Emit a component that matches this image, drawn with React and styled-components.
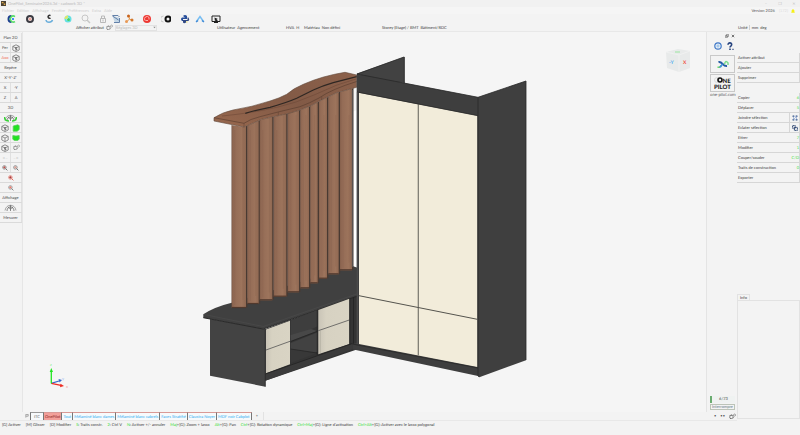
import styled, { createGlobalStyle } from "styled-components";

const GlobalStyle = createGlobalStyle`
    * {
        box-sizing: border-box;
    }

    body {
        margin: 0;
        background: #f3f3f3;
        color: #3c3c3c;
        font-family: Lato, "Liberation Sans", sans-serif;
        font-size: 4px;
        line-height: 6px;
        text-rendering: geometricPrecision;
    }

    button, select, input {
        font: inherit;
        color: inherit;
        margin: 0;
        padding: 0;
        border: 0;
        background: none;
        text-rendering: geometricPrecision;
    }

    svg {
        display: block;
    }
`;

const Page = styled.div`
    min-height: 100vh;
    display: flex;
    flex-direction: column;
    white-space: nowrap;
`;

const TitleBar = styled.header`
    display: flex;
    align-items: center;
    gap: 2px;
    height: 7px;
    padding: 0 3px 0 1px;
    color: #bababa;
    background: #f1f1f1;
`;

const Title = styled.h1`
    flex: 1;
    margin: 0;
    font-size: 4px;
    font-weight: 400;
`;

const WindowButton = styled.button`
    width: 6px;
    margin-left: 6px;
    color: #c4c4c4;
`;

const MenuBar = styled.nav`
    display: flex;
    align-items: center;
    gap: 3px;
    height: 7px;
    padding: 0 5px 0 2px;
    background: #f5f5f5;
`;

const MenuItem = styled.button`
    color: #cecece;
`;

const Version = styled.span`
    margin-left: auto;
    color: #555;

    small {
        margin-left: 3px;
        font-size: 4px;
        color: #ddd;
    }
`;

const ToolBar = styled.div`
    display: flex;
    height: 10px;
    padding-left: 6px;
    background: #f3f3f3;
`;

const ToolGroup = styled.div`
    display: flex;
    gap: ${({ $gap }) => $gap}px;
    margin-right: ${({ $after }) => $after}px;
`;

const ToolButton = styled.button`
    width: 10px;
    height: 10px;
`;

const AttributeBar = styled.div`
    display: grid;
    grid-template-columns: 141px 69px 18px 78px 1fr 62px;
    align-items: center;
    height: 8px;
    padding-left: 76px;
    border-bottom: 1px solid #e8e8e8;
`;

const Attribute = styled.div`
    display: flex;
    align-items: center;
    gap: 2px;
`;

const Unit = styled.span`
    padding-right: 1px;
    border-right: 1px solid #d0d0d0;
    line-height: 5px;
`;

const AttributeSelect = styled.select`
    width: 42px;
    height: 6px;
    color: #bcbcbc;
    border: 1px solid #e2e2e2;
    line-height: 4px;
    appearance: none;
`;

const SelectBox = styled.div`
    display: flex;
    align-items: center;

    svg {
        margin-left: -4px;
        pointer-events: none;
    }
`;

const Main = styled.main`
    flex: 1;
    display: flex;
`;

const Workspace = styled.div`
    flex: 1;
    min-width: 0;
    display: flex;
    flex-direction: column;
`;

const WorkArea = styled.div`
    flex: 1;
    display: flex;
`;

const SideBar = styled.aside`
    display: flex;
    flex-direction: column;
    width: 23px;
    padding-top: 1px;
    border-right: 1px solid #e6e6e6;
`;

const SideRow = styled.div`
    display: flex;
    height: 10px;
    border-bottom: 1px solid #dadada;
`;

const SideButton = styled.button`
    flex: 1;
    display: flex;
    align-items: center;
    justify-content: center;
    color: ${({ $color }) => $color || "#484848"};
    border-right: 1px solid #e0e0e0;
`;

const Viewport = styled.section`
    flex: 1;
    min-width: 0;
    background: #f5f5f5;

    svg {
        width: 100%;
        height: auto;
    }
`;

const Dock = styled.aside`
    display: flex;
    flex-direction: column;
    width: 31px;
    padding: 1px 2px 2px 3px;
    border-left: 1px solid #e4e4e4;
    background: #f3f3f3;
`;

const DockControls = styled.div`
    display: flex;
    justify-content: flex-end;
    gap: 2px;
    height: 5px;
`;

const DockLinks = styled.div`
    display: flex;
    justify-content: space-between;
    padding: 4px 1px 5px 4px;
`;

const DockCard = styled.button`
    display: flex;
    align-items: center;
    justify-content: center;
    height: 18px;
    margin-bottom: 1px;
    border: 1px solid #c9c9c9;
`;

const SiteLink = styled.a`
    font-family: "Open Sans", sans-serif;
    text-align: center;
    color: #444;
    text-decoration: none;
`;

const Progress = styled.div`
    height: 7px;
    margin-top: auto;
    margin-bottom: 1px;
    border-left: 2px solid #6aac70;
    background: #eff2f1;
    text-align: center;
`;

const StopButton = styled.button`
    height: 6px;
    border: 1px solid #bcc4b8;
    line-height: 4px;
    color: #5f7c86;
`;

const TabStrip = styled.div`
    display: flex;
    align-items: stretch;
    height: 9px;
    padding: 0 0 0 25px;
    border-bottom: 1px solid #e8e8e8;
`;

const Tab = styled.button`
    height: 8px;
    padding: 0 ${({ $plain }) => ($plain ? 3 : 1)}px;
    color: ${({ $color }) => $color || "#32adf0"};
    background: ${({ $active }) => ($active ? "#f2a09a" : "#f7fafc")};
    border-top: 1px solid ${({ $plain }) => ($plain ? "#999" : "#d99a96")};
    border-right: 1px solid #777;
    border-left: ${({ $plain }) => ($plain ? "1px solid #777" : "0")};
`;

const TabExtras = styled.div`
    display: flex;
    align-items: center;
    gap: 4px;
    margin-left: auto;
    padding-right: 1px;
`;

const Pin = styled.button`
    display: flex;
    width: 5px;
    padding-top: 2px;
`;

const AddTab = styled.button`
    width: 12px;
    border-right: 1px solid #e2e2e2;
`;

const Panel = styled.aside`
    display: flex;
    flex-direction: column;
    width: 63px;
    padding: 21px 0 2px;
`;

const Command = styled.div`
    display: flex;
    height: 10px;
    border-bottom: 1px solid #d6d6d6;
    border-right: 1px solid #d6d6d6;
`;

const CommandButton = styled.button`
    flex: 1;
    display: flex;
    align-items: center;
    justify-content: space-between;
    padding-left: 1px;
    text-align: left;

    kbd {
        font: inherit;
        color: #40de40;
    }
`;

const CommandIcon = styled.button`
    display: flex;
    align-items: center;
    justify-content: center;
    width: 10px;
    border-left: 1px solid #d6d6d6;
`;

const Spacer = styled.div`
    height: 10px;
`;

const InfoTab = styled.button`
    align-self: flex-start;
    height: 6px;
    margin-top: auto;
    padding: 0 2px;
    border: 1px solid #e2e2e2;
    border-bottom: 0;
    line-height: 5px;
`;

const InfoBox = styled.div`
    height: 119px;
    border: 1px solid #e2e2e2;
`;

const StatusBar = styled.footer`
    display: flex;
    gap: 5px;
    height: 14px;
    padding: 1px 2px 0;
`;

const Hint = styled.span`
    b {
        font-weight: 400;
        color: #2fdd2f;
    }
`;

const Icon = ({ size = 10, children }) => (
    <svg width={size} height={size} viewBox="0 0 20 20" fill="none" strokeWidth="2" aria-hidden="true">
        {children}
    </svg>
);

const Gears = ({ color = "#777" }) => (
    <Icon size={7}>
        <circle cx="7" cy="11" r="5" stroke={color} strokeWidth="3" strokeDasharray="3 1" />
        <circle cx="16" cy="6" r="3" stroke={color} strokeDasharray="2 1" />
    </Icon>
);

const CubeIcon = ({ label }) => (
    <Icon size={8}>
        <path d="M2 6L10 2l8 4v9l-8 4-8-4zM2 6l8 4 8-4" stroke="#777" />
        {label ? <path d="M12 9H9v3h3v3H8" stroke="#555" /> : <path d="M10 10v9" stroke="#777" />}
    </Icon>
);

const Lens = ({ color = "#666", accent }) => (
    <Icon size={6}>
        <circle cx="8" cy="8" r="6" stroke={color} />
        <path d="M12 12l6 6" stroke={color} strokeWidth="3" />
        {accent && <path d="M4 8h8M8 4v8" stroke={accent} strokeWidth="3" />}
    </Icon>
);

const Eye = ({ accent }) => (
    <svg width="13" height="8" viewBox="0 0 26 16" fill="none" aria-hidden="true">
        <path d="M2 13C4 -1 22 -1 24 13" stroke="#888" strokeWidth="1.5" />
        <path d="M6 14C6 3 20 3 20 14M13 2v12M8 6l5 4 5-4" stroke="#666" strokeWidth="1.5" />
        {accent && <path d="M1 6c0 7 5 8 9 8M25 6c0 7-5 8-9 8" stroke="#35d435" strokeWidth="3" />}
    </svg>
);

const GreenBox = ({ flat }) => (
    <Icon size={8}>
        <path d={flat ? "M2 4q8 2 16 0v9l-4 3H6l-4-3z" : "M3 5l11-3 4 2v10l-5 4H3z"} fill="#20e320" stroke="#5ccd5c" />
    </Icon>
);

const tools = [
    {
        gap: 9,
        after: 8,
        items: [
            ["OnePilot", <><path d="M11 4a6 6 0 1 0 0 12" stroke="#1d3f8f" strokeWidth="4" /><path d="M18 5a6 6 0 1 0 0 10" stroke="#55dd65" strokeWidth="3" /><path d="M12 10h4" stroke="#3f8df5" strokeWidth="4" /></>],
            ["Cible", <><circle cx="10" cy="10" r="6" stroke="#3b3b42" strokeWidth="4" /><circle cx="10" cy="10" r="3" fill="#eba59d" /></>],
            ["Cadwork", <><path d="M13 3a3 3 0 1 0 0 5" stroke="#333" strokeWidth="3" /><path d="M4 12c1 6 11 6 13 0" stroke="#6aaedb" strokeWidth="3" /></>],
            ["Couleurs", <><circle cx="10" cy="10" r="5" stroke="#63dfe2" strokeWidth="4" /><path d="M5 10a5 5 0 0 1 5-5" stroke="#dfe967" strokeWidth="4" /><circle cx="11" cy="11" r="3" fill="#41d465" /></>],
        ],
    },
    {
        gap: 7,
        after: 3,
        items: [
            ["Rechercher", <><circle cx="8" cy="8" r="6" stroke="#c7c7c7" /><path d="M12 12l6 6" stroke="#c7c7c7" strokeWidth="3" /></>],
            ["Verrouiller", <path d="M5 9h10v8H5zM7 9V4h6v5M10 11v4" stroke="#b8b8b8" />],
        ],
    },
    {
        gap: 3,
        after: 8,
        items: [
            ["Plans", <><path d="M3 4l13 3v11H8z" fill="#c2d5e5" /><path d="M3 3h11l3 3M3 4l12 8M17 8v9M6 17h11" stroke="#6481a9" /></>],
            ["Liens", <><path d="M5 16l6-6 5 3M11 10L9 3" stroke="#e8933f" /><circle cx="9" cy="4" r="3" fill="#c8641d" /><circle cx="5" cy="15" r="3" fill="#e89956" /><circle cx="16" cy="12" r="3" fill="#d3782e" /></>],
        ],
    },
    {
        gap: 9,
        after: 5,
        items: [
            ["Exporter", <><circle cx="10" cy="10" r="8" fill="#ed3833" /><path d="M6 13a5 5 0 0 1 8-6M14 7v4M7 13h5" stroke="#ffb3ad" /></>],
            ["Bascule", <><path d="M5 4a6 6 0 0 0 0 12" stroke="#c6c6c6" /><circle cx="14" cy="10" r="5" stroke="#111" strokeWidth="4" /></>],
            ["Python", <><path d="M6 4q4-4 8 0v6H6v4H4q-4-4 0-7h6z" fill="#274e9b" /><path d="M15 7h2q3 4 0 7h-5v3q-4 3-6 0v-5h9z" fill="#314984" /><path d="M12 15h3v2h-3z" fill="#e4db68" /></>],
        ],
    },
    {
        gap: 6,
        after: 0,
        items: [
            ["Niveau", <><path d="M3 15l7-10 7 10" stroke="#77bdf2" strokeWidth="3" /><path d="M2 16l4-3M18 16l-4-3" stroke="#438bd5" strokeWidth="3" /></>],
            ["Capture", <><path d="M2 4h16v11H2z" stroke="#222" /><path d="M7 7l7 3-3 1 4 4-2 2-4-4-1 3z" fill="#222" /><path d="M6 17h8" stroke="#222" /></>],
        ],
    },
];

const commands = [
    ["Activer attribut"],
    ["Ajouter"],
    ["Supprimer"],
    null,
    ["Copier", "6"],
    ["Déplacer", "5"],
    ["Joindre sélection", null, "join"],
    ["Eclater sélection", null, "split"],
    ["Etirer", "7"],
    ["Modifier", "1"],
    ["Couper/souder", "C/D"],
    ["Traits de construction", "0"],
    ["Exporter"],
];

const hints = [
    ["", "[G] Activer"],
    ["", "[M] Glisser"],
    ["", "[D] Modifier"],
    ["S", ": Traits constr."],
    ["2", ": Ctrl V"],
    ["N", ": Activer +/- annuler"],
    ["Maj", "+[G]: Zoom + lasso"],
    ["Alt", "+[G]: Pan"],
    ["Ctrl", "+[G]: Rotation dynamique"],
    ["Ctrl+Maj", "+[G]: Ligne d'activation"],
    ["Ctrl+Alt", "+[G]: Activer avec le lasso polygonal"],
];

// left, right, bottom of each claustra slat
const slats = [
    [231.7, 246, 308],
    [247.3, 258.7, 304],
    [259.7, 272.3, 300.3],
    [273.7, 286.3, 296.7],
    [287.7, 299, 292.3],
    [300.3, 309, 288.3],
    [310.3, 317.7, 283.3],
    [319, 327, 278.7],
    [328.3, 338.7, 274.3],
    [340, 352, 270.3],
];

const Model = () => (
    <svg viewBox="23 32 683 380" role="img" aria-label="Vue 3D">
        <defs>
            <linearGradient id="wood">
                <stop offset="0" stopColor="#86604c" />
                <stop offset="0.2" stopColor="#946c56" />
                <stop offset="0.7" stopColor="#9d745c" />
                <stop offset="1" stopColor="#8e6751" />
            </linearGradient>
            <linearGradient id="rail" x1="0" y1="1" x2="1" y2="0">
                <stop offset="0" stopColor="#98684e" />
                <stop offset="0.5" stopColor="#825a46" />
                <stop offset="1" stopColor="#8c614b" />
            </linearGradient>
            <linearGradient id="drawer">
                <stop offset="0" stopColor="#c9c4b7" />
                <stop offset="0.25" stopColor="#d7d2c2" />
                <stop offset="1" stopColor="#d9d4c4" />
            </linearGradient>
        </defs>

        <path d="M352 112L357 110V268L352 267Z" fill="#fff" />

        {/* bench */}
        <path d="M203.3 314.3Q214 307 231.7 302.7L352.3 266L358.3 268V296L263.3 329L203.3 317.7Z" fill="#404040" />
        <path d="M210 319L265.3 329V386.7L210 375.7Z" fill="#434343" />
        <path d="M265.3 329L358.3 295V349L265.3 380.7Z" fill="#343434" />
        <path d="M203.3 317.7L263.3 329L358 296" stroke="#2a2a2a" fill="none" />
        <path d="M204 314.5L263.3 326.5L358 293.5" stroke="#4e4e4e" strokeWidth="0.5" fill="none" />
        <path d="M290.7 320.5L317.3 310V326.5L290.7 338Z" fill="#3e3e3e" />
        <path d="M290.7 335L311 329L317.3 331L290.7 341Z" fill="#484848" />
        <path d="M290.7 343L317.3 332.5V352L290.7 361Z" fill="#424242" />
        <path d="M290.7 349L317.3 353L290.7 363Z" fill="#383838" />
        <path d="M290.7 341.5L318 331M290.7 349L317 353M317.3 310V355" stroke="#222" strokeWidth="0.7" />
        <path d="M266 329.5L290 320.7V364.3L266 373.3Z" fill="url(#drawer)" />
        <path d="M318.3 310L349.3 298.7V344L318.3 354.3Z" fill="url(#drawer)" />
        <path d="M266 350L290 341.3M318.3 330.7L349.3 320" stroke="#555" strokeWidth="0.8" />
        <path d="M320.3 331V353" stroke="#aaa698" strokeWidth="0.6" />
        <path d="M265.3 374L352.3 343.5V349.3L265.3 380.7Z" fill="#3b3b3b" />
        <path d="M265.3 374L352.3 343.5M265.3 329V386.7M349.8 298V345M353.5 297V344" stroke="#232323" strokeWidth="0.8" />

        {/* claustra */}
        {slats.map(([left, right, bottom]) => (
            <g key={left}>
                <rect x={left} y="88" width={right - left + 1.5} height={bottom - 88.5} fill="#493a32" />
                <rect x={left} y="88" width={right - left} height={bottom - 88} fill="url(#wood)" />
                <path d={`M${left + 3} 130V${bottom - 3}M${right - 3} 115V${bottom - 8}`} stroke="#7a5543" strokeWidth="0.3" opacity="0.5" />
                <path d={`M${left} ${bottom - 0.5}H${right}`} stroke="#51392d" strokeWidth="1.2" />
            </g>
        ))}
        <path d="M231 70H356.5V87.3L336.7 92.7L321.7 100Q312 106 300 110L278.3 115.7L261.7 119.3L244 127L231 125Z" fill="#f5f5f5" />
        <path d="M352.3 90V267" stroke="#666" strokeWidth="0.7" />
        <path
            d="M214 117.7Q223 112 233 110Q252 107 270 101Q280 98 286.7 94.3Q294 88 303.3 84.3Q322 76 345 72.3L356.7 75V87.3L336.7 92.7L321.7 100Q312 106 300 110Q290 113.5 278.3 115.7L261.7 119.3L244 127L214 121Z"
            fill="url(#rail)"
            stroke="#60483a"
            strokeWidth="0.6"
        />
        <path d="M214 117.7L244 123.3Q250 119 260 116.7L278 112L300 106.7Q310 103 319 98Q332 89 356.7 81.5" stroke="#553a2d" strokeWidth="0.6" fill="none" />
        <path d="M222 116Q253 113 278 107Q296 103 314 95L337 85L356 79" stroke="#694535" strokeWidth="0.5" fill="none" />
        <path d="M244 123.3V127M278.3 112V115.7M321.7 97V100" stroke="#5f4335" strokeWidth="0.5" />
        <path d="M245.3 113.3Q257 110 270 107.3Q286 103 296.7 98.3L313.3 90Q322 86 333.3 82.7L356.7 76.7" stroke="#2f2723" strokeWidth="1.2" fill="none" />

        {/* wardrobe */}
        <path d="M356.7 73.7L404.5 56.7V83L380 80Z" fill="#424242" />
        <path d="M478 97.3L526 81V360.3L479.3 377.3L478 376.7Z" fill="#3f3f3f" />
        <path d="M356.7 73.7L478 97.3V376L352.3 349.3V344L356.7 343Z" fill="#3e3e3e" />
        <path d="M359 92.7L477.3 115.7V367L359 344Z" fill="#f2ecda" />
        <path d="M418.3 104V355.5" stroke="#77756c" strokeWidth="1.2" />
        <path d="M359 295.7L477.3 319.3" stroke="#55544e" strokeWidth="1" />
        <path d="M357 74L478 97.3L526 81V360M404.3 57V83M478 97V376M357 74L404 57M357 92L478 115.7M352.3 344L478 368" stroke="#282828" strokeWidth="0.8" fill="none" />
        <path d="M357.2 92V344" stroke="#666" strokeWidth="0.5" />

        {/* orientation cube */}
        <path d="M666 52L678 49L690 51V68L679 72L667 68Z" fill="#e8eaea" />
        <path d="M666 52L679 55L690 51M679 55V72" stroke="#f4f4f4" strokeWidth="0.7" fill="none" />
        <path d="M675 52h5" stroke="#9be6a0" />
        <text x="669" y="64" fontSize="5" fontWeight="700" fill="#4faef0">-Y</text>
        <text x="683" y="64" fontSize="5" fontWeight="700" fill="#f15243">X</text>

        {/* axes */}
        <path d="M51.3 383.3L59 381" stroke="#3568cc" strokeWidth="1.3" />
        <path d="M58.5 379L62 380L59.5 382.5Z" fill="#3568cc" />
        <path d="M51.3 383.3L61 385.3" stroke="#ee2b22" strokeWidth="1.3" />
        <path d="M60.5 383.7L64 386L60 387.3Z" fill="#ee2b22" />
        <path d="M51.3 383.5V371" stroke="#22e522" strokeWidth="1.3" />
        <path d="M49.7 372L51.3 368L53 372Z" fill="#22e522" />
        <text x="50" y="366" fontSize="4" fill="#83ec83">z</text>
        <text x="62" y="380" fontSize="4" fill="#9bbcf0">y</text>
        <text x="66" y="388" fontSize="4" fill="#f3a19b">x</text>
    </svg>
);

const sideRows = [
    [["Plan 2D"]],
    [["Per"], [<CubeIcon label />, "", "Perspective"]],
    [["Axo", "#ef6a55"], [<CubeIcon label />, "", "Axonométrie"]],
    [["Repère"]],
    [["X'-Y'-Z'"]],
    [["X"], ["-Y"]],
    [["Z"], ["A"]],
    [["3D"]],
    [[<Eye accent />, "", "Vue"]],
    [[<CubeIcon label />, "", "Filaire"], [<GreenBox />, "", "Ombré"]],
    [[<CubeIcon />, "", "Caché"], [<GreenBox flat />, "", "Surface"]],
    [[<CubeIcon label />, "", "Volume"], [<Gears />, "", "Réglages"]],
    [["◂ ..", "#d0d0d0"], [".. ▸", "#d0d0d0"]],
    [[<Lens accent="#b94f4a" />, "", "Zoom avant"], [<Lens accent="#d99a90" />, "", "Zoom arrière"]],
    [[<Lens color="#e05a4c" accent="#a33" />, "", "Zoom tout"]],
    [[<Lens color="#777" accent="#e8786b" />, "", "Zoom fenêtre"]],
    [["Affichage"]],
    [[<Eye />, "", "Visibilité"]],
    [["Mesurer"]],
];

const App = () => {
    return (
        <Page>
            <GlobalStyle />
            <TitleBar>
                <Icon size={5}>
                    <path d="M0 0h20v20H0z" fill="#4b4334" />
                    <path d="M3 4h7v5H3zM11 10h6v6h-6z" fill="#dfa94c" />
                </Icon>
                <Title>OnePilot_Seminaire2026.3d - cadwork 3D *</Title>
                <WindowButton aria-label="Réduire">–</WindowButton>
                <WindowButton aria-label="Restaurer">❐</WindowButton>
                <WindowButton aria-label="Fermer">✕</WindowButton>
            </TitleBar>
            <MenuBar>
                {["Fichier", "Edition", "Affichage", "Fenêtre", "Préférences", "Extra", "Aide"].map((item) => (
                    <MenuItem key={item}>{item}</MenuItem>
                ))}
                <Version>Version 2026 <small>(172)</small></Version>
                <Icon size={4}>
                    <path d="M3 15V7q7-12 14 0v8l3 4H0z" fill="#f6f018" />
                </Icon>
            </MenuBar>
            <ToolBar>
                {tools.map(({ gap, after, items }) => (
                    <ToolGroup key={items[0][0]} $gap={gap} $after={after}>
                        {items.map(([name, drawing]) => (
                            <ToolButton key={name} aria-label={name}>
                                <Icon>{drawing}</Icon>
                            </ToolButton>
                        ))}
                    </ToolGroup>
                ))}
            </ToolBar>
            <AttributeBar>
                <Attribute>
                    <label htmlFor="attribute">Afficher attribut</label>
                    <Gears />
                    <SelectBox>
                        <AttributeSelect id="attribute" defaultValue="3d">
                            <option value="3d">Réglages 3D</option>
                        </AttributeSelect>
                        <Icon size={3}>
                            <path d="M2 5h16l-8 10z" fill="#888" />
                        </Icon>
                    </SelectBox>
                </Attribute>
                <Attribute><span>Utilisateur</span><span>Agencement</span></Attribute>
                <Attribute><span>HVA</span><span>H</span></Attribute>
                <Attribute><span>Matériau</span><span>Non défini</span></Attribute>
                <Attribute><span>Storey (Etage) / BMT</span><span>Bâtiment/RDC</span></Attribute>
                <Attribute><Unit>Unité</Unit><span>mm</span><span>deg</span></Attribute>
            </AttributeBar>
            <Main>
                <Workspace>
                    <WorkArea>
                        <SideBar>
                            {sideRows.map((row, index) => (
                                <SideRow key={index}>
                                    {row.map(([content, color, label], cell) => (
                                        <SideButton key={cell} $color={color} aria-label={label}>{content}</SideButton>
                                    ))}
                                </SideRow>
                            ))}
                        </SideBar>
                        <Viewport>
                            <Model />
                        </Viewport>
                        <Dock>
                            <DockControls>
                                <button aria-label="Détacher">
                                    <Icon size={4}><path d="M7 2h11v10H7zM2 8h10v10H2z" stroke="#666" strokeWidth="3" /></Icon>
                                </button>
                                <button aria-label="Fermer le panneau">
                                    <Icon size={4}><path d="M4 4l12 12M16 4L4 16" stroke="#555" strokeWidth="4" /></Icon>
                                </button>
                            </DockControls>
                            <DockLinks>
                                <button aria-label="Accueil">
                                    <Icon size={8}>
                                        <circle cx="10" cy="10" r="8" stroke="#3f78c8" strokeWidth="3" />
                                        <circle cx="10" cy="10" r="4" stroke="#bcd9f3" />
                                        <circle cx="10" cy="10" r="2" fill="#4a91e0" />
                                    </Icon>
                                </button>
                                <button aria-label="Aide en ligne">
                                    <Icon size={8}>
                                        <path d="M5 7C5 0 15 1 14 7c0 4-4 3-4 7" stroke="#27447f" strokeWidth="4" />
                                        <path d="M8 16h4v4H8zM16 17h3v3h-3z" fill="#27447f" />
                                    </Icon>
                                </button>
                            </DockLinks>
                            <DockCard aria-label="Connecteur">
                                <svg width="12" height="10" viewBox="0 0 24 20" fill="none" strokeWidth="3">
                                    <path d="M1 16q6 2 7-4" stroke="#72d46f" />
                                    <path d="M3 6c8-2 8 9 17 8" stroke="#245aa5" strokeWidth="4" />
                                    <path d="M15 11c1-6 3-8 7-3v4" stroke="#7bdc8c" />
                                    <path d="M5 16c5 0 4-5 6-6" stroke="#3f8fe0" />
                                </svg>
                            </DockCard>
                            <DockCard aria-label="One Pilot">
                                <svg width="20" height="14" viewBox="0 0 20 14" fontFamily="Lato, sans-serif" fontWeight="900">
                                    <circle cx="4" cy="4" r="2.5" fill="none" stroke="#ccc" strokeWidth="0.6" />
                                    <circle cx="7" cy="4" r="2" fill="none" stroke="#111" strokeWidth="1.6" />
                                    <text x="9.5" y="6.5" fontSize="6" fill="#222">NE</text>
                                    <text x="1" y="12.5" fontSize="6" fill="#222">PILOT</text>
                                </svg>
                            </DockCard>
                            <SiteLink href="#one-pilot">one-pilot.com</SiteLink>
                            <Progress>6/73</Progress>
                            <StopButton>Interrompre</StopButton>
                        </Dock>
                    </WorkArea>
                    <TabStrip>
                        <Pin aria-label="Epingler">
                            <Icon size={4}><path d="M4 18V2h12v9H5" stroke="#777" strokeWidth="3" /></Icon>
                        </Pin>
                        <Tab $color="#666" $plain>ITC</Tab>
                        <Tab $color="#8d2222" $active>OnePilot</Tab>
                        <Tab>Tout</Tab>
                        <Tab>Mélaminé blanc dames</Tab>
                        <Tab>Mélaminé blanc cabrels</Tab>
                        <Tab>Faces Stratifié</Tab>
                        <Tab>Claustra Noyer</Tab>
                        <Tab>MDF noir Cabplot</Tab>
                        <AddTab aria-label="Ajouter un onglet">+</AddTab>
                        <TabExtras>
                            <button>•</button>
                            <button>••</button>
                            <button aria-label="Options"><Gears color="#555" /></button>
                        </TabExtras>
                    </TabStrip>
                </Workspace>
                <Panel>
                    {commands.map((command, index) => {
                        if (!command) return <Spacer key={index} />;
                        const [name, shortcut, icon] = command;
                        return (
                            <Command key={name}>
                                <CommandButton>
                                    {name}
                                    {shortcut && <kbd>{shortcut}</kbd>}
                                </CommandButton>
                                {icon && (
                                    <CommandIcon aria-label={`${name} : options`}>
                                        <Icon size={6}>
                                            {icon === "join" ? (
                                                <>
                                                    <path d="M2 2h5v5H2zM13 2h5v5h-5zM2 13h5v5H2zM13 13h5v5h-5z" fill="#35507f" />
                                                    <path d="M5 4h10v12H5zM5 15L15 5" stroke="#7d9acb" />
                                                </>
                                            ) : (
                                                <path d="M2 2h9v9H2zM8 8h10v10H8z" stroke="#263f6d" strokeWidth="3" strokeDasharray="5 1" />
                                            )}
                                        </Icon>
                                    </CommandIcon>
                                )}
                            </Command>
                        );
                    })}
                    <InfoTab>Info</InfoTab>
                    <InfoBox />
                </Panel>
            </Main>
            <StatusBar>
                {hints.map(([key, text]) => (
                    <Hint key={key + text}>
                        <b>{key}</b>{text}
                    </Hint>
                ))}
            </StatusBar>
        </Page>
    );
};

export default App;
